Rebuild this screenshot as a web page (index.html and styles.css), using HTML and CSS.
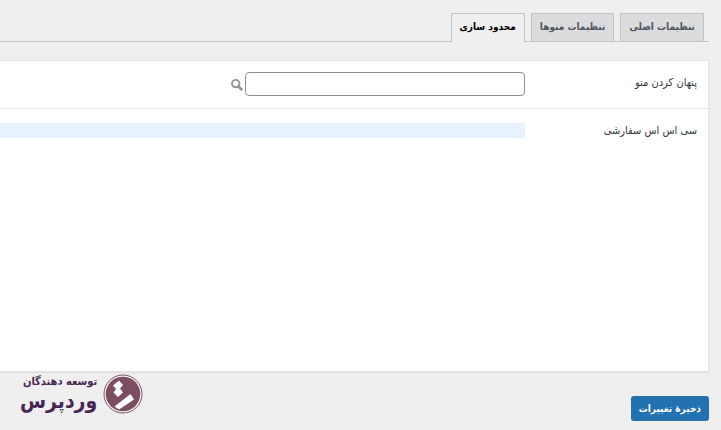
FILE: index.html
```html
<!DOCTYPE html>
<html lang="fa" dir="rtl">
<head>
<meta charset="utf-8">
<title>محدود سازی</title>
<link rel="stylesheet" href="styles.css">
</head>
<body>
<nav class="tabs">
  <a class="tab" href="#main">تنظیمات اصلی</a>
  <a class="tab" href="#menus">تنظیمات منوها</a>
  <a class="tab tab-active" href="#limits">محدود سازی</a>
</nav>
<form class="settings">
  <div class="panel">
    <div class="row">
      <label class="label" for="hide-menu">پنهان کردن منو</label>
      <div class="field">
        <input class="text-input" id="hide-menu" type="text">
        <button class="search" type="button" aria-label="جستجو">
          <svg width="12" height="12" viewBox="0 0 12 12" fill="none" stroke="#949499">
            <circle cx="4.7" cy="4.6" r="3.7" stroke-width="1.9"/>
            <path d="M7.3 7.2 L11.200 11.100" stroke-width="2.8"/>
          </svg>
        </button>
      </div>
    </div>
    <div class="row row-code">
      <label class="label" for="custom-css">سی اس اس سفارشی</label>
      <textarea class="code" id="custom-css" dir="ltr"></textarea>
    </div>
  </div>
  <footer class="footer">
    <button class="save" type="submit">ذخیرهٔ تغییرات</button>
    <div class="brand">
      <svg class="brand-mark" width="40" height="40" viewBox="0 0 40 40">
        <circle cx="20" cy="20" r="19" fill="#f8f4f6" stroke="#7b5165" stroke-width="1"/>
        <circle cx="20" cy="20" r="17.3" fill="#7b4e62"/>
        <path d="M16 6.500 L20 11 L17 14.500 L20 18.500 L15 23 L10.500 18.500 L13 15 L10 11.500 Z" fill="#fff"/>
        <path d="M27.500 20 L31 25.500 L16 35.500 L11.500 32.500 Z" fill="#fff"/>
      </svg>
      <div class="brand-name">
        <span class="brand-small">توسعه دهندگان</span>
        <span class="brand-large">وردپرس</span>
      </div>
    </div>
  </footer>
</form>
</body>
</html>
```
FILE: styles.css
```css
* {
  box-sizing: border-box;
}

body {
  margin: 0;
  padding: 13px 12px 0 0;
  background: #efefef;
  color: #32373c;
  font: 11px/16px "DejaVu Sans Condensed", "DejaVu Sans", sans-serif;
}

button,
input,
textarea {
  font: inherit;
}

.tabs {
  display: flex;
  gap: 6px;
  padding-right: 5px;
  border-bottom: 1px solid #c3c4c7;
}

.tab {
  height: 28px;
  padding: 5px 8px;
  border: 1px solid #c3c4c7;
  border-bottom: 0;
  background: #dcdcde;
  color: #50575e;
  font-size: 10px;
  font-weight: bold;
  text-decoration: none;
  white-space: nowrap;
}

.tab-active {
  height: 29px;
  margin-bottom: -1px;
  background: #efefef;
  color: #000;
}

.panel {
  margin-top: 18px;
  border: 1px solid #e5e5e5;
  border-left: 0;
  background: #fff;
  box-shadow: 0 1px 1px #e2e2e2;
}

.row {
  display: flex;
  align-items: flex-start;
  padding: 11px 11px 12px 0;
}

.row-code {
  border-top: 1px solid #e5e5e5;
  padding: 14px 11px 0 0;
}

.label {
  flex: 0 0 172px;
}

.row:first-child .label {
  padding-top: 3px;
}

.field {
  display: flex;
  flex: 1;
  align-items: center;
  gap: 2px;
}

.text-input {
  width: 280px;
  height: 24px;
  padding: 0 8px;
  border: 1px solid #8c8f94;
  border-radius: 4px;
  background: #fff;
}

.search {
  display: flex;
  padding: 2px 0 0;
  border: 0;
  background: none;
}

.code {
  display: block;
  flex: 1;
  height: 248px;
  padding: 0;
  border: 0;
  outline: 0;
  resize: none;
  background: linear-gradient(#e8f2ff, #e8f2ff) top / 100% 15px no-repeat;
  font: 12px/15px "Liberation Mono", monospace;
}

.footer {
  display: flex;
  justify-content: space-between;
  align-items: flex-start;
}

.save {
  height: 25px;
  margin-top: 24px;
  padding: 0 8px;
  border: 0;
  border-radius: 3px;
  background: #2271b1;
  color: #fff;
  font-size: 10px;
  font-weight: bold;
}

.brand {
  display: flex;
  gap: 6px;
  margin: 2px 0 0 20px;
}

.brand-name {
  display: flex;
  flex-direction: column;
  color: #472653;
  font-weight: bold;
  white-space: nowrap;
}

.brand-small {
  font-size: 11px;
  line-height: 16px;
}

.brand-large {
  font-size: 21px;
  line-height: 22px;
}
```
